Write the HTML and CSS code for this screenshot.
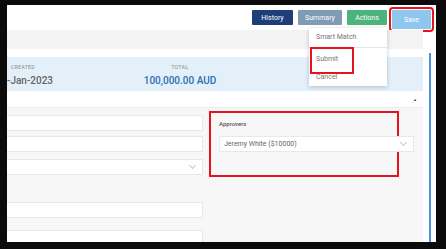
FILE: index.html
```html
<!DOCTYPE html>
<html lang="en">
<head>
  <meta charset="UTF-8">
  <title>Invoice</title>
  <link rel="stylesheet" href="styles.css">
</head>
<body>

  <div class="frame">
    <div class="topbar">
      <button class="btn btn-history">History</button>
      <button class="btn btn-summary">Summary</button>
      <div class="actions">
        <button class="btn btn-actions">Actions</button>
        <div class="menu">
          <div class="menu-item first">Smart Match</div>
          <div class="menu-item submit">Submit</div>
          <div class="menu-item last">Cancel</div>
        </div>
      </div>
      <button class="btn btn-save">Save</button>
    </div>

    <div class="body">
      <div class="main">
        <div class="graybar"></div>

        <div class="infoband">
          <div class="info info-created">
            <div class="info-label">Created</div>
            <div class="info-value">-Jan-2023</div>
          </div>
          <div class="info info-total">
            <div class="info-label">Total</div>
            <div class="info-value blue">100,000.00 AUD</div>
          </div>
          <div class="info info-status">
            <span class="status-mark"></span>
          </div>
        </div>

        <div class="section-head">
          <span class="caret">&#9650;</span>
        </div>

        <div class="content">
          <div class="col-left">
            <div class="field"></div>
            <div class="field f2"></div>
            <div class="field f3 select"><span class="chev"></span></div>
            <div class="field f4"></div>
            <div class="field f5"></div>
          </div>
          <div class="col-right">
            <div class="highlight"></div>
            <div class="label">Approvers</div>
            <div class="field select approver">Jeremy White ($10000)<span class="chev"></span></div>
          </div>
        </div>
      </div>

      <div class="scrollcol">
        <div class="thumb"></div>
      </div>
    </div>
  </div>

</body>
</html>
```

FILE: styles.css
```css
* {
  margin: 0;
  padding: 0;
  box-sizing: border-box;
  font-family: Roboto, 'Liberation Sans', sans-serif;
}
body {
  background: #0b0b0b;
  width: 446px;
  height: 249px;
  overflow: hidden;
  padding: 5px 10px 0 7px;
}

.frame {
  width: 429px;
  height: 237px;
  background: #ffffff;
  overflow: hidden;
  display: flex;
  flex-direction: column;
}

/* top buttons */
.topbar {
  height: 25px;
  flex-shrink: 0;
  display: flex;
  justify-content: flex-end;
  align-items: flex-start;
  gap: 5px;
  padding: 5px 5px 0 0;
}
.btn {
  display: block;
  height: 15px;
  border: none;
  border-radius: 1px;
  color: #ffffff;
  font-size: 7px;
  text-align: center;
}
.btn-history { width: 41px; background: #1c3e7b; }
.btn-summary { width: 44px; background: #7f9bb6; }
.btn-actions { width: 40px; background: #4bb47c; }
.btn-save {
  width: 39px;
  height: 19px;
  background: #8fc6ee;
  outline: 2px solid #e5141c;
  outline-offset: 1px;
}

.actions {
  position: relative;
  display: flex;
}
.menu {
  position: absolute;
  right: 0;
  top: 18px;
  width: 78px;
  background: #ffffff;
  box-shadow: 0 1px 4px rgba(0, 0, 0, 0.22);
  padding-bottom: 1px;
  z-index: 5;
}
.menu-item {
  position: relative;
  height: 15px;
  line-height: 15px;
  padding-left: 7px;
  font-size: 7px;
  color: #777;
}
.menu-item.first {
  height: 20px;
  line-height: 19px;
  border-bottom: 1px solid #e6e6e6;
  margin-bottom: 4px;
}
.menu-item.last {
  margin-top: 3px;
}
.menu-item.submit::after {
  content: "";
  position: absolute;
  left: 1px;
  top: -5px;
  width: 40px;
  height: 23px;
  border: 2px solid #e5141c;
}

/* body */
.body {
  flex: 1;
  display: flex;
}
.main {
  width: 416px;
  display: flex;
  flex-direction: column;
}
.scrollcol {
  width: 13px;
  padding: 23px 0 0 6px;
}
.thumb {
  width: 2px;
  height: 100%;
  background: #4c93dc;
}

.graybar {
  height: 19px;
  background: #f3f3f3;
  margin-bottom: 8px;
}

.infoband {
  height: 34px;
  background: #e3eff9;
  display: flex;
  padding-top: 7px;
}
.info-label {
  font-size: 5px;
  letter-spacing: 0.4px;
  text-transform: uppercase;
  color: #888;
  height: 7px;
  line-height: 7px;
}
.info-value {
  margin-top: 4px;
  font-size: 10px;
  font-weight: 500;
  color: #666;
  line-height: 12px;
  white-space: nowrap;
}
.info-value.blue { color: #2c6db4; }
.info-created { width: 133px; }
.info-created .info-label { padding-left: 4px; }
.info-total { width: 80px; text-align: center; }
.info-status { margin-left: 95px; padding-top: 10px; }
.status-mark {
  display: block;
  width: 3px;
  height: 8px;
  background: #3f8edc;
}

.section-head {
  height: 17px;
  display: flex;
  justify-content: flex-end;
  align-items: center;
  padding-right: 6px;
  border-bottom: 1px solid #ececec;
}
.caret {
  font-size: 4px;
  color: #444;
}

/* form area */
.content {
  flex: 1;
  background: #f7f7f7;
  display: flex;
}
.col-left {
  width: 196px;
  padding-top: 7px;
}
.field {
  position: relative;
  height: 16px;
  background: #ffffff;
  border: 1px solid #e8e8e8;
  border-left: 0;
}
.f2 { margin-top: 5px; }
.f3 { margin-top: 7px; }
.f4 { margin-top: 27px; }
.f5 { margin-top: 12px; }
.chev {
  position: absolute;
  right: 7px;
  top: 3px;
  width: 5px;
  height: 5px;
  border-right: 1px solid #c8c8c8;
  border-bottom: 1px solid #c8c8c8;
  transform: rotate(45deg);
}

.col-right {
  position: relative;
  flex: 1;
  padding: 12px 9px 0 16px;
}
.highlight {
  position: absolute;
  left: 6px;
  top: 3px;
  width: 190px;
  height: 66px;
  border: 2px solid #e5141c;
}
.label {
  font-size: 6px;
  font-weight: 500;
  color: #555;
  line-height: 8px;
}
.approver {
  margin-top: 8px;
  border-left: 1px solid #ececec;
  font-size: 7px;
  color: #666;
  line-height: 14px;
  padding-left: 4px;
}
```
